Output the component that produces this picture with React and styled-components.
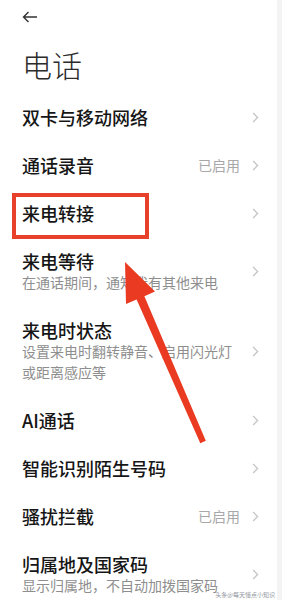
import styled, { createGlobalStyle } from 'styled-components';

const GlobalStyle = createGlobalStyle`
  html, body {
    margin: 0;
    padding: 0;
    background: #f3f3f3;
  }
  body {
    font-family: "Noto Sans CJK SC", "Noto Sans", sans-serif;
    color: #1a1a1a;
  }
`;

const Page = styled.div`
  position: relative;
  width: 277px;
  height: 600px;
  overflow: hidden;
  background: #fff;
  padding: 0 18px 0 22px;
  box-sizing: border-box;
`;

const TopBar = styled.div`
  height: 34px;
  display: flex;
  align-items: center;
`;

const Title = styled.h1`
  margin: 8px 0 0;
  height: 51px;
  font-size: 30px;
  line-height: 44px;
  font-weight: 300;
  color: #2b2b2b;
`;

const List = styled.div`
  display: flex;
  flex-direction: column;
`;

const Row = styled.div`
  display: flex;
  align-items: center;
  justify-content: space-between;
  min-height: ${(p) => (p.$multi ? 'auto' : '48px')};
  padding: ${(p) => (p.$multi ? '13px 0' : '0')};
`;

const Texts = styled.div`
  display: flex;
  flex-direction: column;
`;

const RowTitle = styled.div`
  font-size: 18px;
  line-height: 22px;
  font-weight: 500;
  color: #161616;
`;

const Sub = styled.div`
  font-size: 14px;
  line-height: 21px;
  color: #8e8e8e;
  max-width: 220px;
`;

const Right = styled.div`
  display: flex;
  align-items: center;
  gap: 12px;
  flex-shrink: 0;
`;

const Value = styled.span`
  font-size: 14px;
  color: #a8a8a8;
`;

const Highlight = styled.div`
  position: absolute;
  left: 12px;
  top: 193px;
  width: 137px;
  height: 46px;
  border: 4px solid #e8412b;
  box-sizing: border-box;
`;

const Overlay = styled.svg`
  position: absolute;
  left: 0;
  top: 0;
  pointer-events: none;
`;

const Watermark = styled.div`
  position: absolute;
  right: 2px;
  bottom: 2px;
  font-size: 6px;
  line-height: 7px;
  color: #8f959d;
  white-space: nowrap;
`;

const Chevron = () => (
  <svg width="7" height="11" viewBox="0 0 7 11">
    <path d="M1.2 1l4.4 4.5-4.4 4.5" fill="none" stroke="#c3c3c3" strokeWidth="1.3" />
  </svg>
);

const items = [
  { title: '双卡与移动网络' },
  { title: '通话录音', value: '已启用' },
  { title: '来电转接' },
  { title: '来电等待', sub: '在通话期间，通知我有其他来电' },
  { title: '来电时状态', sub: '设置来电时翻转静音、启用闪光灯或距离感应等' },
  { title: 'AI通话' },
  { title: '智能识别陌生号码' },
  { title: '骚扰拦截', value: '已启用' },
  { title: '归属地及国家码', sub: '显示归属地，不自动加拨国家码' },
];

export default function App() {
  return (
    <>
      <GlobalStyle />
      <Page>
        <TopBar>
          <svg width="16" height="12" viewBox="0 0 16 12">
            <path d="M15 6H1.5M6.5 1L1.5 6l5 5" fill="none" stroke="#333" strokeWidth="1.4" />
          </svg>
        </TopBar>
        <Title>电话</Title>
        <List>
          {items.map((it) => (
            <Row key={it.title} $multi={!!it.sub}>
              <Texts>
                <RowTitle>{it.title}</RowTitle>
                {it.sub && <Sub>{it.sub}</Sub>}
              </Texts>
              <Right>
                {it.value && <Value>{it.value}</Value>}
                <Chevron />
              </Right>
            </Row>
          ))}
        </List>
        <Highlight />
        <Overlay width="277" height="600" viewBox="0 0 277 600">
          <polygon
            points="125,262 155,291.5 144.4,296.2 205.8,440.8 200.3,443.2 136.6,299.4 126,304"
            fill="#ea3a22"
          />
        </Overlay>
        <Watermark>头条@每天懂点小知识</Watermark>
      </Page>
    </>
  );
}
